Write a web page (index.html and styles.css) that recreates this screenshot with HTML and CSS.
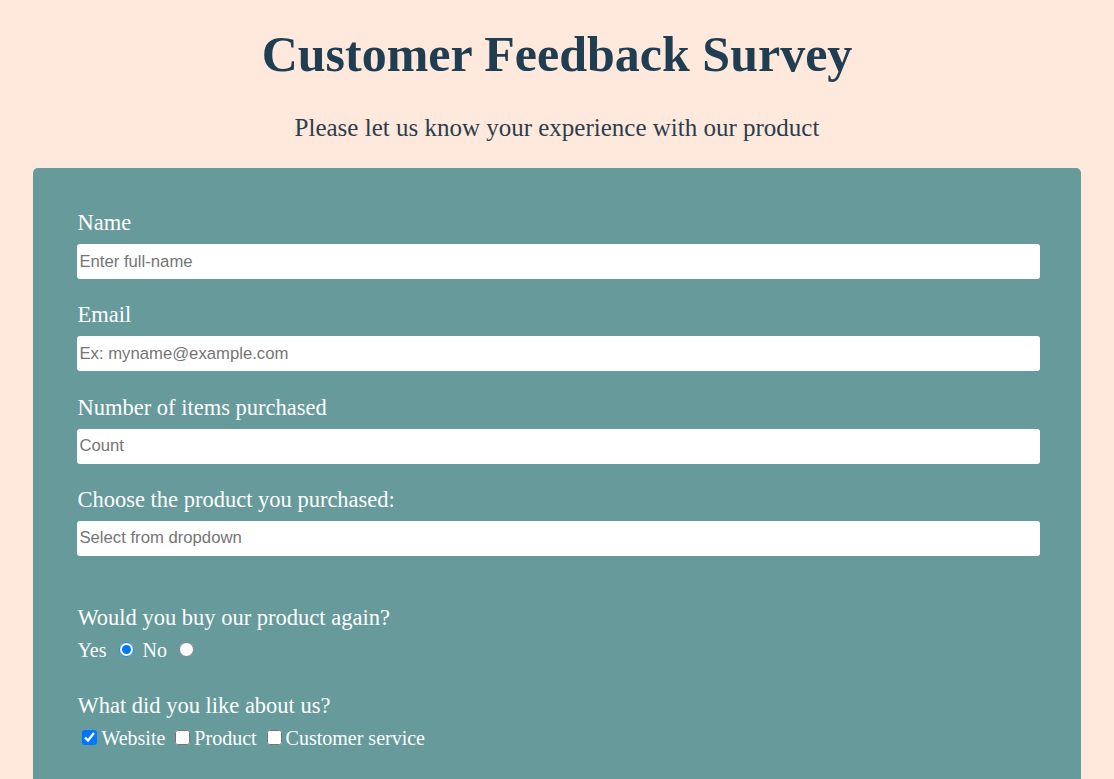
FILE: index.html
```html
<!DOCTYPE html>
<html lang="en">
<head>
<meta charset="utf-8">
<title>Customer Feedback Survey</title>
<link rel="stylesheet" href="styles.css">
</head>
<body>
<header class="header">
  <h1 class="title">Customer Feedback Survey</h1>
  <p class="subtitle">Please let us know your experience with our product</p>
</header>
<form class="survey">
  <div class="group">
    <label class="label" for="name">Name</label>
    <input class="field" id="name" type="text" placeholder="Enter full-name">
  </div>
  <div class="group">
    <label class="label" for="email">Email</label>
    <input class="field" id="email" type="email" placeholder="Ex: myname@example.com">
  </div>
  <div class="group">
    <label class="label" for="count">Number of items purchased</label>
    <input class="field" id="count" type="number" placeholder="Count">
  </div>
  <div class="group">
    <label class="label" for="product">Choose the product you purchased:</label>
    <input class="field" id="product" type="text" placeholder="Select from dropdown">
  </div>
  <div class="group group-choice">
    <p class="label">Would you buy our product again?</p>
    <div class="options">
      <label class="opt">Yes<input class="radio" type="radio" name="again" checked></label>
      <label class="opt">No<input class="radio" type="radio" name="again"></label>
    </div>
  </div>
  <div class="group group-choice2">
    <p class="label">What did you like about us?</p>
    <div class="options checks">
      <label class="opt"><input class="check" type="checkbox" checked>Website</label>
      <label class="opt"><input class="check" type="checkbox">Product</label>
      <label class="opt"><input class="check" type="checkbox">Customer service</label>
    </div>
  </div>
</form>
</body>
</html>
```
FILE: styles.css
```css
html, body {
  margin: 0;
  padding: 0;
}
body {
  background: #ffe9dc;
  font-family: "Liberation Serif", "Times New Roman", serif;
  overflow: hidden;
}
.header {
  text-align: center;
  padding-top: 22px;
}
.title {
  margin: 0;
  font-size: 50px;
  line-height: 64px;
  font-weight: bold;
  color: #1f3e52;
}
.subtitle {
  margin: 28px 0 0;
  font-size: 25px;
  line-height: 28px;
  color: #2c3e4c;
}
.survey {
  width: 94%;
  margin: 26px auto 0;
  background: #669a9b;
  border-radius: 5px;
  padding: 42px 41px 40px 44px;
  box-sizing: border-box;
  color: #fff;
  min-height: 700px;
}
.group {
  display: flex;
  flex-direction: column;
  margin-bottom: 23.3px;
}
.label {
  font-size: 22.5px;
  line-height: 26px;
  margin: 0 0 8px;
}
.field {
  height: 35px;
  border: none;
  border-radius: 3px;
  padding: 0 2px;
  font-family: "Liberation Sans", Arial, sans-serif;
  font-size: 16.7px;
  color: #333;
  background: #fff;
  box-sizing: border-box;
  outline: none;
}
.field::placeholder {
  color: #757575;
}
.group-choice {
  margin-top: 49px;
  margin-bottom: 32px;
}
.options {
  display: flex;
  align-items: center;
  font-size: 20px;
  line-height: 22px;
}
.opt {
  display: inline-flex;
  align-items: center;
}
.radio {
  width: 15px;
  height: 15px;
  margin: 0 9px 0 12px;
}
.check {
  width: 15px;
  height: 15px;
  margin: 0 4px 0 5px;
}
.checks .opt + .opt .check {
  margin-left: 10px;
}
```
